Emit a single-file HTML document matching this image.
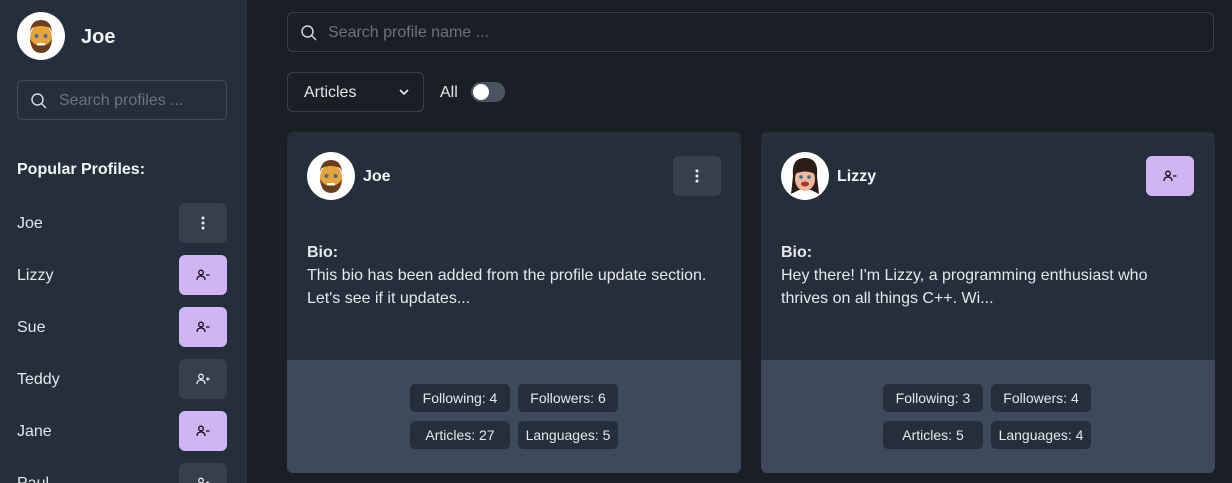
<!DOCTYPE html>
<html style="width:1232px;height:483px;overflow:hidden"><head><meta charset="utf-8"><style>
*{box-sizing:border-box;margin:0;padding:0}
body{width:1232px;height:483px;overflow:hidden;background:#1a1e25;font-family:"Liberation Sans",sans-serif;color:#e5e7eb;position:relative}
.side{position:absolute;left:0;top:0;width:247px;height:483px;background:#252f3c;overflow:hidden}
.av{position:absolute;border-radius:50%;background:#fff;overflow:hidden}
.search{position:absolute;border:1px solid #434c59;border-radius:6px;color:#6b7280;font-size:16px}
.btn{position:absolute;width:48px;height:40px;border-radius:6px;display:flex;align-items:center;justify-content:center}
.g{background:#363f4c}.p{background:#d0b4f4}
.name{position:absolute;left:17px;font-size:16px;color:#e5e7eb}
.card{position:absolute;top:132px;width:454px;height:341px;background:#252f3c;border-radius:6px;overflow:hidden}
.foot{position:absolute;left:0;top:228px;width:100%;height:113px;background:#3e4a5b}
.chip{position:absolute;height:28px;background:#252f3c;border-radius:5px;font-size:14px;color:#e5e7eb;display:flex;align-items:center;justify-content:center}
.bio{position:absolute;left:20px;top:109px;font-size:16px;line-height:23px;color:#e5e7eb}
</style></head><body>
<div class="side">
 <div class="av" style="left:17px;top:12px;width:48px;height:48px"><svg width="48" height="48" viewBox="0 0 48 48"><ellipse cx="24" cy="26" rx="11" ry="14" fill="#e8a33a"/><path d="M13 20 Q14 8 24 8 Q34 8 35 20 L33 16 Q24 12 15 16Z" fill="#6b3e1f"/><path d="M13 27 Q14 41 24 41 Q34 41 35 27 Q30 35 24 33 Q18 35 13 27Z" fill="#6b3e1f"/><circle cx="19.5" cy="24" r="2" fill="#3b6ea5"/><circle cx="28.5" cy="24" r="2" fill="#3b6ea5"/><rect x="20" y="31" width="8" height="2.5" rx="1" fill="#fff"/></svg></div>
 <div style="position:absolute;left:81px;top:26px;font-size:20px;font-weight:bold;color:#f3f4f6">Joe</div>
 <div class="search" style="left:17px;top:80px;width:210px;height:40px"><svg style="position:absolute;left:12px;top:11px" width="18" height="18" viewBox="0 0 18 18" fill="none" stroke="#d1d5db" stroke-width="1.5"><circle cx="7.5" cy="7.5" r="5.5"/><path d="M11.5 11.5L16 16"/></svg><span style="position:absolute;left:41px;top:11px">Search profiles ...</span></div>
 <div style="position:absolute;left:17px;top:161px;font-size:16px;font-weight:bold;color:#f3f4f6">Popular Profiles:</div>
 <div class="name" style="top:215px">Joe</div><div class="btn g" style="left:179px;top:203px"><svg width="4" height="14"><circle cx="2" cy="2" r="1.5" fill="#e5e7eb"/><circle cx="2" cy="7" r="1.5" fill="#e5e7eb"/><circle cx="2" cy="12" r="1.5" fill="#e5e7eb"/></svg></div>
 <div class="name" style="top:267px">Lizzy</div><div class="btn p" style="left:179px;top:255px"><svg width="14" height="12" viewBox="0 0 14 12" fill="none" stroke="#111" stroke-width="1.3"><circle cx="5" cy="3.5" r="2.3"/><path d="M1 11Q1 7 5 7Q9 7 9 11M10 6H13.5"/></svg></div>
 <div class="name" style="top:319px">Sue</div><div class="btn p" style="left:179px;top:307px"><svg width="14" height="12" viewBox="0 0 14 12" fill="none" stroke="#111" stroke-width="1.3"><circle cx="5" cy="3.5" r="2.3"/><path d="M1 11Q1 7 5 7Q9 7 9 11M10 6H13.5"/></svg></div>
 <div class="name" style="top:371px">Teddy</div><div class="btn g" style="left:179px;top:359px"><svg width="14" height="12" viewBox="0 0 14 12" fill="none" stroke="#e5e7eb" stroke-width="1.3"><circle cx="5" cy="3.5" r="2.3"/><path d="M1 11Q1 7 5 7Q9 7 9 11M10 6H13.5M11.75 4.25V7.75"/></svg></div>
 <div class="name" style="top:423px">Jane</div><div class="btn p" style="left:179px;top:411px"><svg width="14" height="12" viewBox="0 0 14 12" fill="none" stroke="#111" stroke-width="1.3"><circle cx="5" cy="3.5" r="2.3"/><path d="M1 11Q1 7 5 7Q9 7 9 11M10 6H13.5"/></svg></div>
 <div class="name" style="top:475px">Paul</div><div class="btn g" style="left:179px;top:463px"><svg width="14" height="12" viewBox="0 0 14 12" fill="none" stroke="#e5e7eb" stroke-width="1.3"><circle cx="5" cy="3.5" r="2.3"/><path d="M1 11Q1 7 5 7Q9 7 9 11M10 6H13.5M11.75 4.25V7.75"/></svg></div>
</div>
<div class="search" style="left:287px;top:12px;width:927px;height:40px;border-color:#3a414c"><svg style="position:absolute;left:12px;top:11px" width="18" height="18" viewBox="0 0 18 18" fill="none" stroke="#d1d5db" stroke-width="1.5"><circle cx="7.5" cy="7.5" r="5.5"/><path d="M11.5 11.5L16 16"/></svg><span style="position:absolute;left:40px;top:11px">Search profile name ...</span></div>
<div class="search" style="left:287px;top:72px;width:137px;height:40px;border-color:#3a414c;color:#e5e7eb"><span style="position:absolute;left:16px;top:11px">Articles</span><svg style="position:absolute;left:111px;top:16px" width="10" height="7" fill="none" stroke="#e5e7eb" stroke-width="1.6"><path d="M1 1L5 5L9 1"/></svg></div>
<div style="position:absolute;left:440px;top:84px;font-size:16px">All</div>
<div style="position:absolute;left:471px;top:82px;width:34px;height:20px;border-radius:10px;background:#4b5260"><div style="position:absolute;left:2px;top:2px;width:16px;height:16px;border-radius:50%;background:#fff"></div></div>

<div class="card" style="left:287px">
 <div class="av" style="left:20px;top:20px;width:48px;height:48px"><svg width="48" height="48" viewBox="0 0 48 48"><ellipse cx="24" cy="26" rx="11" ry="14" fill="#e8a33a"/><path d="M13 20 Q14 8 24 8 Q34 8 35 20 L33 16 Q24 12 15 16Z" fill="#6b3e1f"/><path d="M13 27 Q14 41 24 41 Q34 41 35 27 Q30 35 24 33 Q18 35 13 27Z" fill="#6b3e1f"/><circle cx="19.5" cy="24" r="2" fill="#3b6ea5"/><circle cx="28.5" cy="24" r="2" fill="#3b6ea5"/><rect x="20" y="31" width="8" height="2.5" rx="1" fill="#fff"/></svg></div>
 <div style="position:absolute;left:76px;top:36px;font-size:16px;font-weight:bold;color:#f3f4f6">Joe</div>
 <div class="btn g" style="left:386px;top:24px"><svg width="4" height="14"><circle cx="2" cy="2" r="1.5" fill="#e5e7eb"/><circle cx="2" cy="7" r="1.5" fill="#e5e7eb"/><circle cx="2" cy="12" r="1.5" fill="#e5e7eb"/></svg></div>
 <div class="bio"><b>Bio:</b><br>This bio has been added from the profile update section.<br>Let's see if it updates...</div>
 <div class="foot">
  <div class="chip" style="left:123px;top:24px;width:100px">Following: 4</div>
  <div class="chip" style="left:231px;top:24px;width:100px">Followers: 6</div>
  <div class="chip" style="left:123px;top:61px;width:100px">Articles: 27</div>
  <div class="chip" style="left:231px;top:61px;width:100px">Languages: 5</div>
 </div>
</div>
<div class="card" style="left:761px">
 <div class="av" style="left:20px;top:20px;width:48px;height:48px"><svg width="48" height="48" viewBox="0 0 48 48"><path d="M12 24 Q10 6 24 6 Q38 6 36 24 L38 42 L30 38 L18 38 L10 42Z" fill="#2b1d18"/><ellipse cx="24" cy="27" rx="10" ry="12" fill="#f0b79a"/><path d="M14 22 Q15 11 24 11 Q33 11 34 22 Q24 17 14 22Z" fill="#2b1d18"/><circle cx="20" cy="25" r="1.8" fill="#3a6a8a"/><circle cx="28" cy="25" r="1.8" fill="#3a6a8a"/><ellipse cx="24" cy="32" rx="4" ry="2.5" fill="#a33"/></svg></div>
 <div style="position:absolute;left:76px;top:36px;font-size:16px;font-weight:bold;color:#f3f4f6">Lizzy</div>
 <div class="btn p" style="left:385px;top:24px"><svg width="14" height="12" viewBox="0 0 14 12" fill="none" stroke="#111" stroke-width="1.3"><circle cx="5" cy="3.5" r="2.3"/><path d="M1 11Q1 7 5 7Q9 7 9 11M10 6H13.5"/></svg></div>
 <div class="bio"><b>Bio:</b><br>Hey there! I'm Lizzy, a programming enthusiast who<br>thrives on all things C++. Wi...</div>
 <div class="foot">
  <div class="chip" style="left:122px;top:24px;width:100px">Following: 3</div>
  <div class="chip" style="left:230px;top:24px;width:100px">Followers: 4</div>
  <div class="chip" style="left:122px;top:61px;width:100px">Articles: 5</div>
  <div class="chip" style="left:230px;top:61px;width:100px">Languages: 4</div>
 </div>
</div>
</body></html>
